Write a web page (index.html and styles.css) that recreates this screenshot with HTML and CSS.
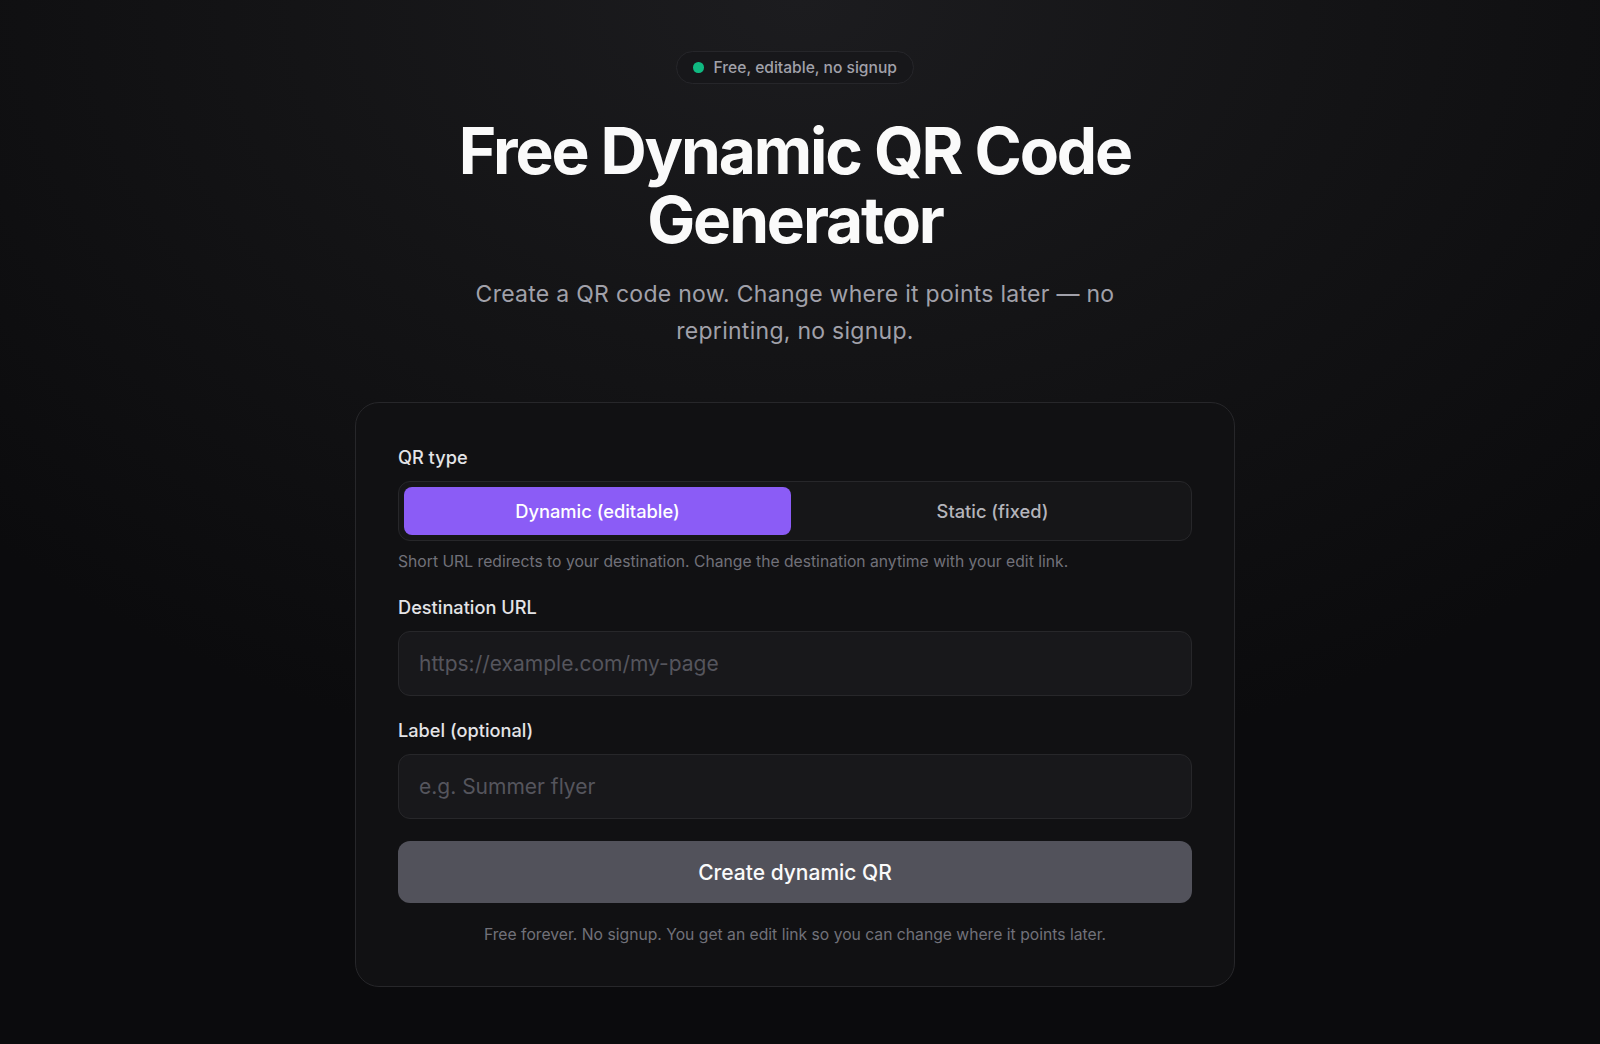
FILE: index.html
```html
<!DOCTYPE html>
<html lang="en">
<head>
<meta charset="utf-8">
<title>Free Dynamic QR Code Generator</title>
<link rel="stylesheet" href="styles.css">
</head>
<body>
<main class="page">
  <div class="badge"><span class="badge-dot"></span><span>Free, editable, no signup</span></div>
  <h1 class="title">Free Dynamic QR Code Generator</h1>
  <p class="subtitle">Create a QR code now. Change where it points later — no reprinting, no signup.</p>

  <form class="card">
    <div class="field">
      <label class="label">QR type</label>
      <div class="toggle">
        <button type="button" class="toggle-btn active">Dynamic (editable)</button>
        <button type="button" class="toggle-btn">Static (fixed)</button>
      </div>
      <p class="help">Short URL redirects to your destination. Change the destination anytime with your edit link.</p>
    </div>
    <div class="field">
      <label class="label" for="dest">Destination URL</label>
      <input class="input" id="dest" type="text" placeholder="https://example.com/my-page">
    </div>
    <div class="field">
      <label class="label" for="lbl">Label (optional)</label>
      <input class="input" id="lbl" type="text" placeholder="e.g. Summer flyer">
    </div>
    <button type="button" class="submit">Create dynamic QR</button>
    <p class="note">Free forever. No signup. You get an edit link so you can change where it points later.</p>
  </form>
</main>
</body>
</html>
```
FILE: styles.css
```css
* { box-sizing: border-box; }
html, body { margin: 0; padding: 0; }
body {
  min-height: 1044px;
  background: radial-gradient(ellipse 70% 75% at 50% 0%, #1c1c1f 0%, #141416 45%, #0b0b0d 100%) #0b0b0d;
  font-family: Inter, "Noto Sans", "Liberation Sans", sans-serif;
  color: #fafafa;
  overflow: hidden;
}
.page {
  display: flex;
  flex-direction: column;
  align-items: center;
  padding: 51px 10px 0 0;
}
.badge {
  display: flex;
  align-items: center;
  gap: 10px;
  height: 33px;
  padding: 0 16px;
  border: 1px solid #26262a;
  border-radius: 999px;
  background: rgba(22, 22, 25, 0.6);
  color: #a1a1aa;
  font-size: 15.6px;
  font-weight: 500;
}
.badge-dot {
  width: 10.5px;
  height: 10.5px;
  border-radius: 50%;
  background: #10b981;
}
.title {
  margin: 32px 0 0;
  max-width: 780px;
  text-align: center;
  font-size: 64px;
  line-height: 69px;
  font-weight: 700;
  letter-spacing: -0.033em;
  color: #fafafa;
}
.subtitle {
  margin: 22px 0 0;
  max-width: 700px;
  text-align: center;
  font-size: 23px;
  line-height: 36.5px;
  letter-spacing: 0.012em;
  color: #a1a1aa;
}
.card {
  margin-top: 53px;
  width: 880px;
  padding: 42px 42px 39px;
  border: 1px solid #27272a;
  border-radius: 24px;
  background: #111113;
  display: flex;
  flex-direction: column;
  gap: 22px;
}
.field {
  display: flex;
  flex-direction: column;
}
.label {
  font-size: 18.2px;
  line-height: 25.5px;
  font-weight: 500;
  color: #e4e4e7;
  margin-bottom: 10px;
}
.toggle {
  display: grid;
  grid-template-columns: 1fr 1fr;
  gap: 8px;
  padding: 5px;
  border: 1px solid #27272a;
  border-radius: 12px;
  background: #161618;
}
.toggle-btn {
  height: 48px;
  border: 0;
  border-radius: 8px;
  background: transparent;
  color: #b4b4bb;
  font-family: inherit;
  font-size: 18.3px;
  font-weight: 500;
}
.toggle-btn.active {
  background: #8b5cf6;
  color: #ffffff;
}
.help {
  margin: 10px 0 0;
  font-size: 15.7px;
  line-height: 22.5px;
  color: #71717a;
}
.input {
  height: 65.5px;
  padding: 0 20px;
  border: 1px solid #27272a;
  border-radius: 12px;
  background: #18181b;
  color: #fafafa;
  font-family: inherit;
  font-size: 21px;
  outline: none;
}
.input::placeholder { color: #55555d; }
.submit {
  height: 62px;
  border: 0;
  border-radius: 12px;
  background: #52525b;
  color: #fafafa;
  font-family: inherit;
  font-size: 21px;
  font-weight: 500;
}
.note {
  margin: -1px 0 0;
  text-align: center;
  font-size: 15.7px;
  line-height: 22.5px;
  color: #71717a;
}
```
